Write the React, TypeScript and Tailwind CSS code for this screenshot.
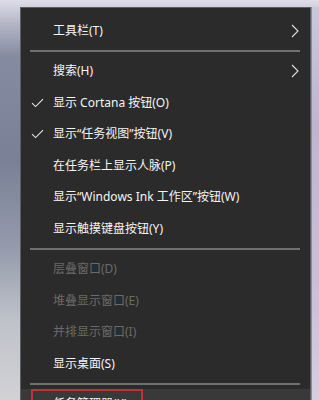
import React from 'react';

type Item = {
  label: string;
  checked?: boolean;
  submenu?: boolean;
  disabled?: boolean;
};

const groups: Item[][] = [
  [{ label: '工具栏(T)', submenu: true }],
  [
    { label: '搜索(H)', submenu: true },
    { label: '显示 Cortana 按钮(O)', checked: true },
    { label: '显示“任务视图”按钮(V)', checked: true },
    { label: '在任务栏上显示人脉(P)' },
    { label: '显示“Windows Ink 工作区”按钮(W)' },
    { label: '显示触摸键盘按钮(Y)' },
  ],
  [
    { label: '层叠窗口(D)', disabled: true },
    { label: '堆叠显示窗口(E)', disabled: true },
    { label: '并排显示窗口(I)', disabled: true },
    { label: '显示桌面(S)' },
  ],
];

function Check() {
  return (
    <svg width="13" height="10" viewBox="0 0 13 10" fill="none">
      <path d="M1 5.2 L4.6 8.6 L12 1.2" stroke="#e8e8e8" strokeWidth="1.1" />
    </svg>
  );
}

function Chevron() {
  return (
    <svg width="8" height="14" viewBox="0 0 8 14" fill="none">
      <path d="M1 1 L7 7 L1 13" stroke="#e0e0e0" strokeWidth="1.1" />
    </svg>
  );
}

function Separator() {
  return (
    <div className="flex h-[9px] items-center pl-[9px] pr-[10px]">
      <div className="h-[2px] w-full bg-[#707070]" />
    </div>
  );
}

function MenuRow({ item }: { item: Item }) {
  return (
    <div className="flex h-[31.5px] items-center">
      <div className="flex w-[32px] justify-center pl-[1px]">{item.checked && <Check />}</div>
      <span className={item.disabled ? 'flex-1 text-[#6a6a6a]' : 'flex-1 text-[#f4f4f4]'}>
        {item.label}
      </span>
      <div className="flex w-[19px] justify-start">{item.submenu && <Chevron />}</div>
    </div>
  );
}

export default function App() {
  return (
    <div className="flex h-[400px] w-[319px] overflow-hidden bg-[linear-gradient(180deg,#dedde8_0%,#b4b6c6_6%,#858ba0_14%,#7a8096_40%,#959bac_62%,#bfc2ca_80%,#d2d2d4_100%)] pl-[20px] pt-[7px] font-['Noto_Sans','Noto_Sans_CJK_SC',sans-serif] text-[12px]">
      <div className="flex h-[420px] w-[291px] flex-col border border-[#5e5e5e] bg-[#2b2b2b] pt-[7px]">
        {groups.map((g, gi) => (
          <React.Fragment key={gi}>
            {gi > 0 && <Separator />}
            {g.map((it) => (
              <MenuRow key={it.label} item={it} />
            ))}
          </React.Fragment>
        ))}
        <Separator />
        <div className="flex h-[31.5px] items-center bg-[#393939]">
          <div className="ml-[10px] flex h-full w-[112px] items-center border-2 border-[#c2303c] pl-[20px] text-[#f4f4f4]">
            任务管理器(K)
          </div>
        </div>
      </div>
      <div className="h-full flex-1 border-l border-[#8c88a2] bg-[linear-gradient(180deg,#c8c8dc_0%,#bdb6d2_30%,#c9bfd9_70%,#d3cfe0_100%)]" />
    </div>
  );
}
